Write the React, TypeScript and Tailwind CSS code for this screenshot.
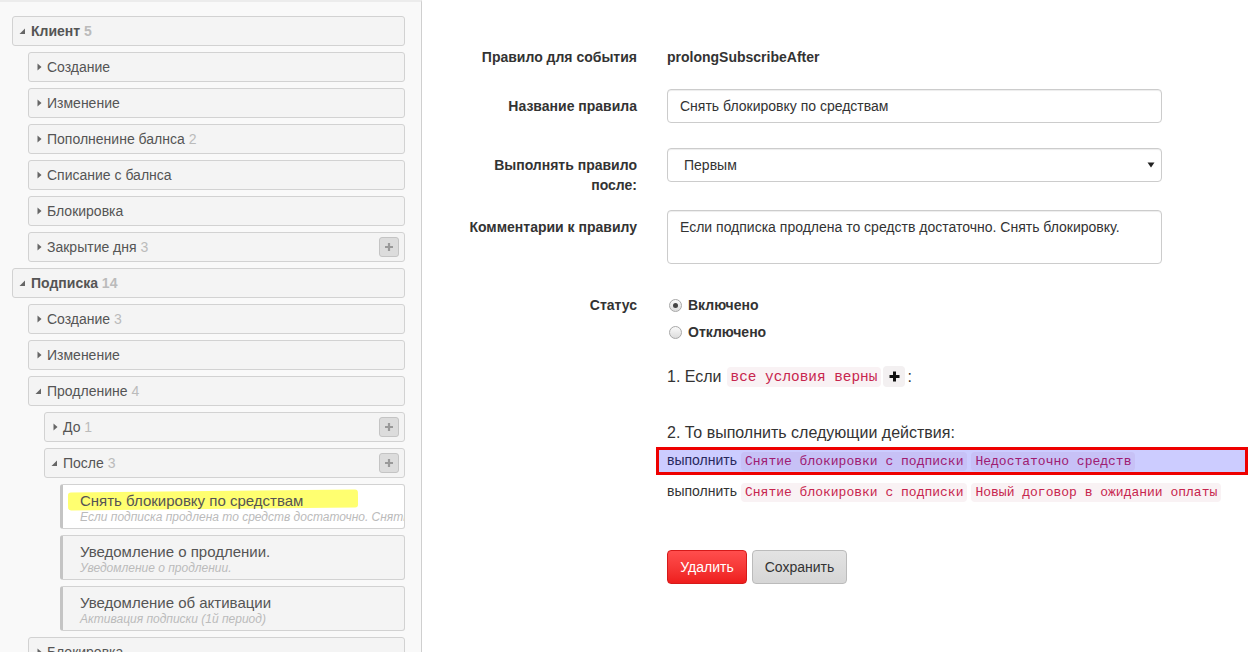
import React from "react";

const font = { fontFamily: '"Liberation Sans", Arial, sans-serif' };

const Arrow = ({ open }: { open?: boolean }) =>
  open ? (
    <svg width="7" height="7" viewBox="0 0 7 7" className="shrink-0">
      <polygon points="6,0.5 6,6 0.5,6" fill="#666" />
    </svg>
  ) : (
    <svg width="5" height="8" viewBox="0 0 5 8" className="shrink-0">
      <polygon points="0.5,0.5 4.5,4 0.5,7.5" fill="#666" />
    </svg>
  );

const PlusBtn = () => (
  <div className="w-[20px] h-[20px] rounded-[3px] bg-[#dcdcdc] border border-[#c4c4c4] flex items-center justify-center">
    <svg width="10" height="10" viewBox="0 0 10 10">
      <path d="M5 1v8M1 5h8" stroke="#999" strokeWidth="2.2" />
    </svg>
  </div>
);

type NodeProps = {
  level: number;
  label: string;
  count?: number;
  open?: boolean;
  bold?: boolean;
  plus?: boolean;
};

const Node = ({ level, label, count, open, bold, plus }: NodeProps) => {
  const ml = ["ml-0", "ml-[16px]", "ml-[32px]"][level];
  return (
    <div
      className={`${ml} shrink-0 h-[30px] flex items-center pr-[5px] bg-[#f4f4f4] border border-[#d2d2d2] rounded-[3px] ${
        open ? "pl-[6px]" : "pl-[8px]"
      }`}
    >
      <Arrow open={open} />
      <span className={`ml-[5px] text-[14px] text-[#555] ${bold ? "font-bold" : ""}`}>
        {label}
        {count !== undefined && <span className="text-[#bbb]"> {count}</span>}
      </span>
      <div className="flex-1" />
      {plus && <PlusBtn />}
    </div>
  );
};

const Leaf = ({ title, sub, active, mark }: { title: string; sub: string; active?: boolean; mark?: boolean }) => (
  <div
    className={`ml-[48px] shrink-0 h-[45px] border border-[#d2d2d2] border-l-[3px] border-l-[#c4c4c4] rounded-[3px] pl-[17px] pt-[6px] overflow-hidden whitespace-nowrap relative ${
      active ? "bg-white" : "bg-[#f4f4f4]"
    }`}
  >
    {mark && (
      <div className="absolute left-[5px] top-[6px] w-[290px] h-[18px] bg-[#ffff70] rounded-[3px] -rotate-[0.6deg]" />
    )}
    <div className="relative text-[15px] leading-[19px] text-[#555]">{title}</div>
    <div className="relative text-[12px] leading-[14px] italic text-[#bbb]">{sub}</div>
  </div>
);

const Code = ({ children, big }: { children: React.ReactNode; big?: boolean }) => (
  <code
    className={`bg-[#f9f2f4] text-[#c7254e] rounded-[4px] px-[4px] py-[2px] ${big ? "text-[14.4px]" : "text-[13px]"}`}
    style={{ fontFamily: '"Liberation Mono", "Courier New", monospace' }}
  >
    {children}
  </code>
);

const Radio = ({ checked, label }: { checked?: boolean; label: string }) => (
  <div className="flex items-center h-[20px]">
    <div className="w-[13px] h-[13px] rounded-full border border-[#a8a8a8] bg-gradient-to-b from-[#fafafa] to-[#dcdcdc] flex items-center justify-center ml-[1px]">
      {checked && <div className="w-[5px] h-[5px] rounded-full bg-[#444]" />}
    </div>
    <span className="ml-[6px] font-bold text-[14px] text-[#333]">{label}</span>
  </div>
);

export default function App() {
  return (
    <div className="w-[1256px] h-[652px] flex bg-white overflow-hidden" style={font}>
      <aside className="w-[422px] h-[652px] shrink-0 bg-[#f9f9f9] border-r border-[#cfcfcf] border-t-2 border-t-[#ececec] pt-[14px] pl-[12px] pr-[16px] overflow-hidden flex flex-col gap-[6px]">
        <Node level={0} label="Клиент" count={5} open bold />
        <Node level={1} label="Создание" />
        <Node level={1} label="Изменение" />
        <Node level={1} label="Пополненине балнса" count={2} />
        <Node level={1} label="Списание с балнса" />
        <Node level={1} label="Блокировка" />
        <Node level={1} label="Закрытие дня" count={3} plus />
        <Node level={0} label="Подписка" count={14} open bold />
        <Node level={1} label="Создание" count={3} />
        <Node level={1} label="Изменение" />
        <Node level={1} label="Продленине" count={4} open />
        <Node level={2} label="До" count={1} plus />
        <Node level={2} label="После" count={3} open plus />
        <Leaf
          title="Снять блокировку по средствам"
          sub="Если подписка продлена то средств достаточно. Снять блокировку."
          active
          mark
        />
        <Leaf title="Уведомление о продлении." sub="Уведомление о продлении." />
        <Leaf title="Уведомление об активации" sub="Активация подписки (1й период)" />
        <Node level={1} label="Блокировка" />
      </aside>

      <main className="flex-1 pt-[40px] text-[14px] text-[#333]">
        <div className="flex gap-[30px]">
          <div className="w-[215px] text-right font-bold pt-[7px] leading-[20px]">Правило для события</div>
          <div className="w-[495px] font-bold pt-[7px] leading-[20px]">prolongSubscribeAfter</div>
        </div>

        <div className="flex gap-[30px] mt-[22px]">
          <div className="w-[215px] text-right font-bold pt-[7px] leading-[20px]">Название правила</div>
          <div className="w-[495px] h-[34px] border border-[#ccc] rounded-[4px] px-[12px] flex items-center shadow-[inset_0_1px_1px_rgba(0,0,0,0.075)]">
            Снять блокировку по средствам
          </div>
        </div>

        <div className="flex gap-[30px] mt-[25px]">
          <div className="w-[215px] text-right font-bold pt-[7px] leading-[20px] pl-[60px]">Выполнять правило после:</div>
          <div className="w-[495px] h-[34px] border border-[#ccc] rounded-[4px] pl-[16px] pr-[6px] flex items-center shadow-[inset_0_1px_1px_rgba(0,0,0,0.075)]">
            <span className="flex-1">Первым</span>
            <svg width="8" height="6" viewBox="0 0 8 6">
              <polygon points="0.5,0.5 7.5,0.5 4,5.5" fill="#222" />
            </svg>
          </div>
        </div>

        <div className="flex gap-[30px] mt-[15px]">
          <div className="w-[215px] text-right font-bold pt-[7px] leading-[20px]">Комментарии к правилу</div>
          <div className="w-[495px] h-[54px] border border-[#ccc] rounded-[4px] px-[12px] pt-[6px] leading-[20px] shadow-[inset_0_1px_1px_rgba(0,0,0,0.075)]">
            Если подписка продлена то средств достаточно. Снять блокировку.
          </div>
        </div>

        <div className="flex gap-[30px] mt-[24px]">
          <div className="w-[215px] text-right font-bold pt-[7px] leading-[20px]">Статус</div>
          <div className="w-[560px] pt-[7px]">
            <div className="flex flex-col gap-[7px] ml-[1px]">
              <Radio checked label="Включено" />
              <Radio label="Отключено" />
            </div>

            <div className="mt-[23px] flex items-center text-[16px] leading-[22px]">
              <span>1. Если</span>
              <span className="ml-[5px]">
                <Code big>все условия верны</Code>
              </span>
              <span className="ml-[2px] bg-[#f3f0f1] rounded-[4px] w-[22px] h-[21px] flex items-center justify-center">
                <svg width="11" height="11" viewBox="0 0 11 11">
                  <path d="M5.5 0.5v10M0.5 5.5h10" stroke="#111" strokeWidth="3" />
                </svg>
              </span>
              <span className="ml-[2px]">:</span>
            </div>

            <div className="mt-[34px] text-[16px] leading-[22px]">2. То выполнить следующии действия:</div>

            <div className="relative mt-[3px] h-[27px] flex items-center">
              <span>выполнить</span>
              <span className="ml-[4px]">
                <Code>Снятие блокировки с подписки</Code>
              </span>
              <span className="ml-[4px]">
                <Code>Недостаточно средств</Code>
              </span>
              <div className="absolute -left-[11px] top-0 w-[592px] h-[28px] border-[3px] border-[#ee0000] bg-[rgba(0,0,255,0.2)]" />
            </div>

            <div className="mt-[4px] h-[27px] flex items-center">
              <span>выполнить</span>
              <span className="ml-[4px]">
                <Code>Снятие блокировки с подписки</Code>
              </span>
              <span className="ml-[4px]">
                <Code>Новый договор в ожидании оплаты</Code>
              </span>
            </div>

            <div className="mt-[45px] flex gap-[5px]">
              <button className="h-[34px] w-[80px] rounded-[4px] text-white text-[14px] bg-gradient-to-b from-[#ff4d4d] to-[#ee1c1c] border border-[#d61a1a]">
                Удалить
              </button>
              <button className="h-[34px] w-[95px] rounded-[4px] text-[#333] text-[14px] bg-gradient-to-b from-[#e3e3e3] to-[#d6d6d6] border border-[#bbb]">
                Сохранить
              </button>
            </div>
          </div>
        </div>
      </main>
    </div>
  );
}
